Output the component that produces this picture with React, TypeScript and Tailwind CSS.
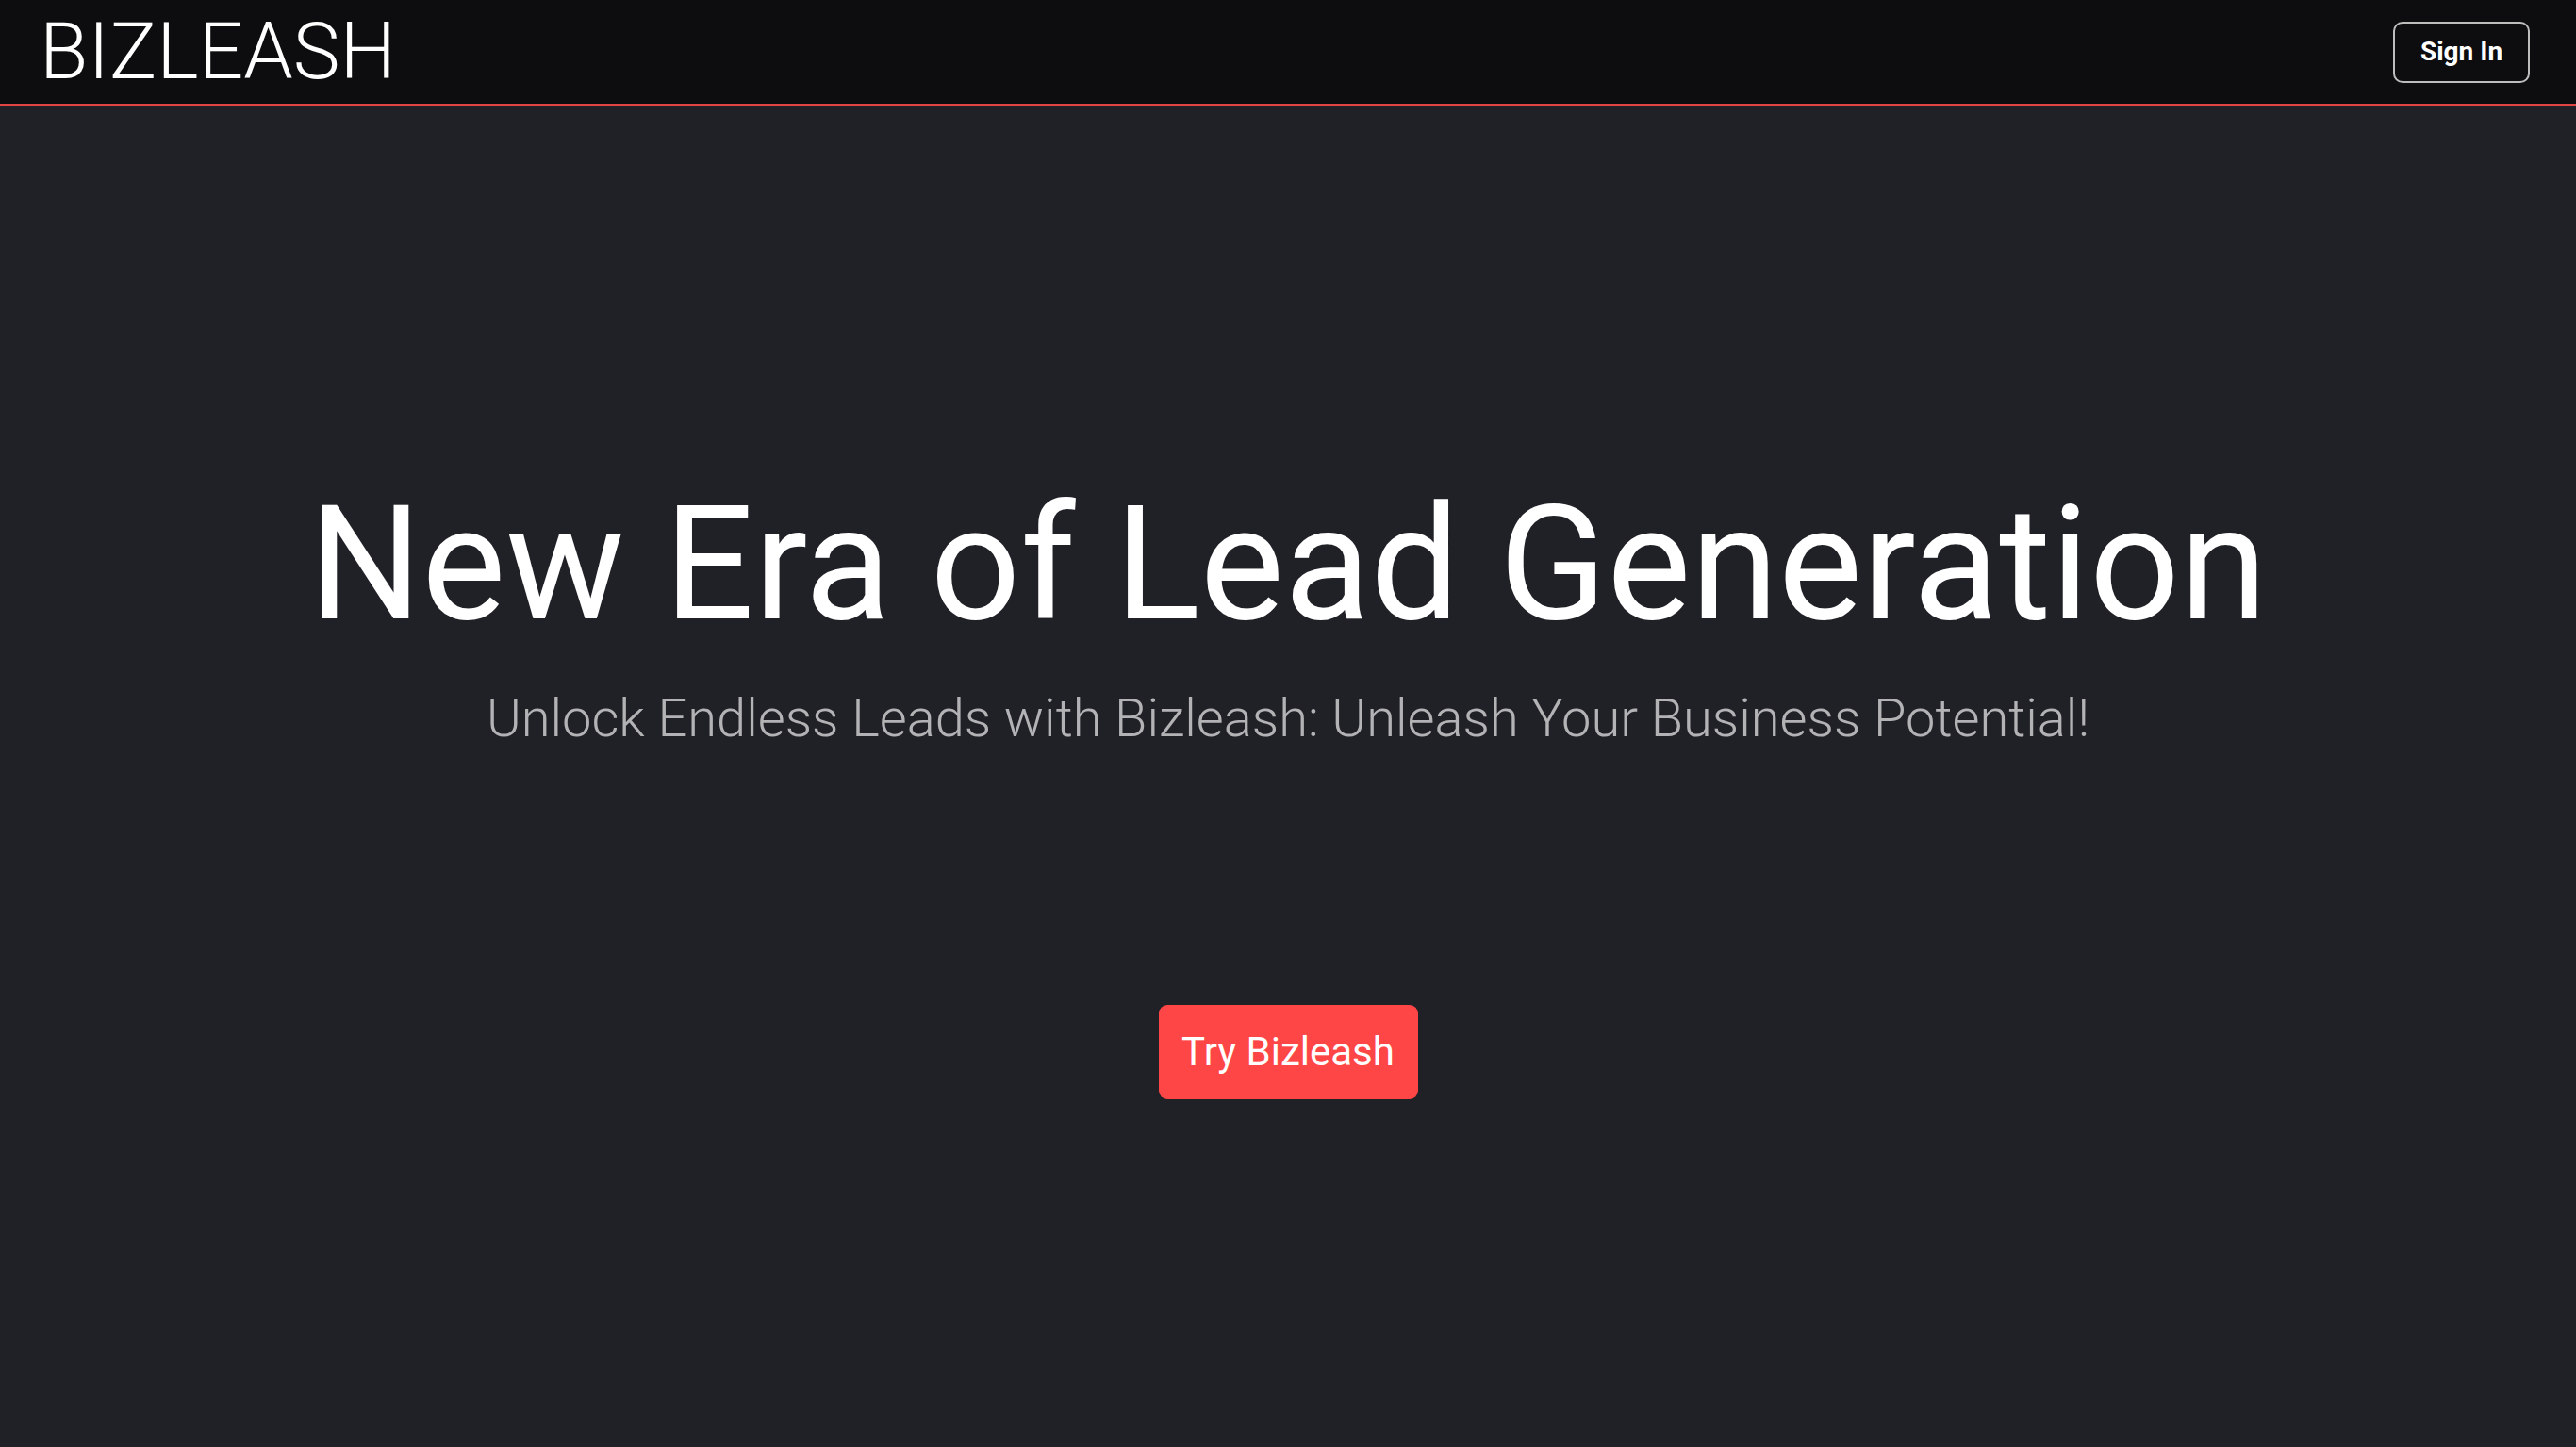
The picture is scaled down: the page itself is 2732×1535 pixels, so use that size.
import React from "react";

export default function App() {
  return (
    <div className="min-h-[1535px] w-full bg-[#202126] flex flex-col" style={{ fontFamily: "Roboto, 'Noto Sans', sans-serif" }}>
      <header className="h-[112px] bg-[#0d0d0f] border-b-2 border-[#e04444] flex items-center justify-between pl-[42px] pr-[49px] box-border">
        <div className="text-[84px] leading-none font-light text-white">BIZLEASH</div>
        <button className="h-[65px] w-[145px] rounded-[10px] border-2 border-[#bdbdbd] flex items-center justify-center text-[28px] font-bold text-white leading-none">
          Sign In
        </button>
      </header>
      <main className="flex flex-col items-center pt-[403px]">
        <h1 className="text-[168px] leading-none font-normal text-white whitespace-nowrap">New Era of Lead Generation</h1>
        <p className="mt-[51px] text-[56px] leading-none font-light text-[#b3b3b6] whitespace-nowrap">
          Unlock Endless Leads with Bizleash: Unleash Your Business Potential!
        </p>
        <button className="mt-[276px] h-[100px] w-[275px] rounded-[9px] bg-[#ff4646] text-white text-[42px] leading-none font-normal flex items-center justify-center">
          Try Bizleash
        </button>
      </main>
    </div>
  );
}
